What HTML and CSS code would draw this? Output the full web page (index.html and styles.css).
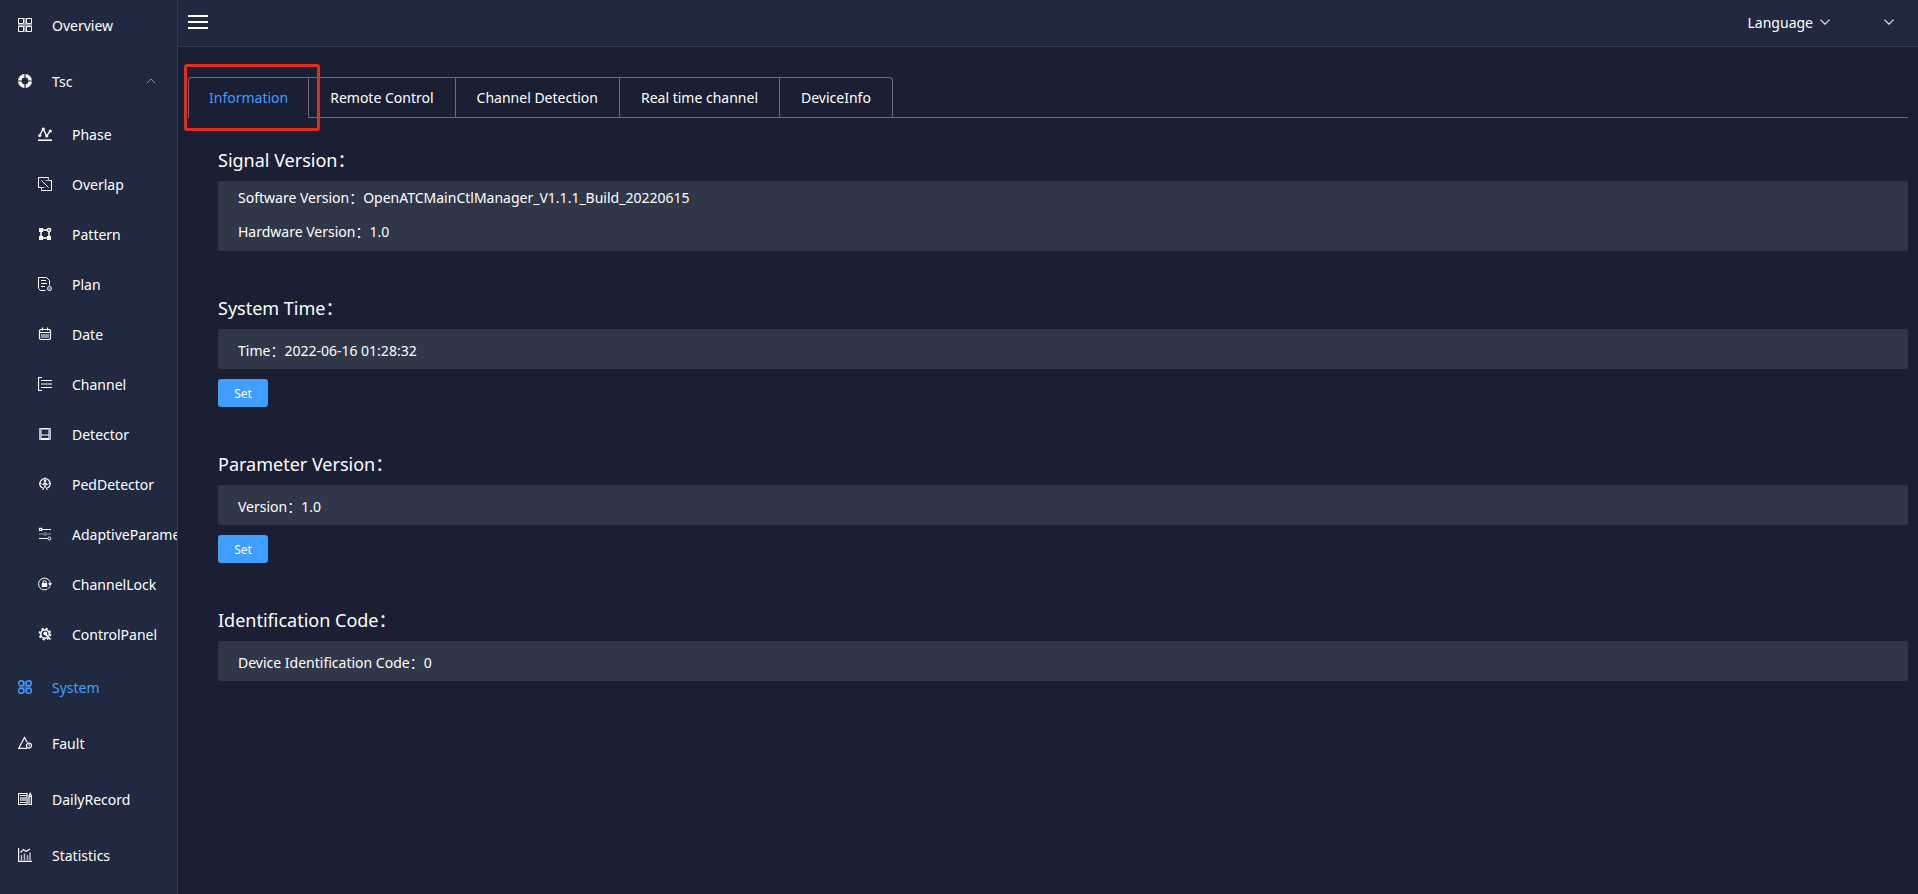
FILE: index.html
```html
<!DOCTYPE html>
<html lang="en">
<head>
<meta charset="utf-8">
<title>System Information</title>
<link rel="stylesheet" href="styles.css">
</head>
<body>
<div class="app">
  <nav class="sidebar" aria-label="Main">
    <a class="item first" href="#"><svg class="icon" viewBox="0 0 14 14"><path d="M6 0h2v14H6zM0 6h14v2H0z" fill="#8d95a6" stroke="none"/><path d="M.5.5h5v5h-5zM8.500.5h5v5h-5zM.5 8.500h5v5h-5zM8.500 8.500h5v5h-5z"/></svg><span class="label">Overview</span></a>
    <a class="item" href="#"><svg class="icon" viewBox="0 0 14 14"><circle cx="7" cy="7" r="5.200" stroke-width="3.600"/><path d="M7 0v4M7 10v4M0 7h4M10 7h4" stroke="#202940" stroke-width="1.200"/></svg><span class="label">Tsc</span><svg class="caret" viewBox="0 0 10 6"><path d="M.7 5.300 5 1l4.300 4.300"/></svg></a>
    <div class="sub">
      <a class="subitem" href="#"><svg class="icon" viewBox="0 0 14 14"><path d="M0 13.200h14" stroke-width="1.600"/><path d="M1.500 8.500 5.300 2l3.400 7 3.800-5.300" stroke-width="1.300"/><g fill="currentColor" stroke="none"><circle cx="1.700" cy="8.500" r="1.600"/><circle cx="5.300" cy="2" r="1.600"/><circle cx="8.700" cy="9" r="1.600"/><circle cx="12.300" cy="4" r="1.600"/></g></svg><span class="label">Phase</span></a>
      <a class="subitem" href="#"><svg class="icon" viewBox="0 0 14 14"><path d="M4.500 10.500h-4V.5h10v3M11 3.500h2.500v10h-10V11"/><path d="M3.500 13.500v-3h3M10.500.5v3h-3" stroke="#b4bac6"/><path d="M3.500 3.500 10.500 10.500"/></svg><span class="label">Overlap</span></a>
      <a class="subitem" href="#"><svg class="icon" viewBox="0 0 14 14"><path d="M3 3h8v8H3z" stroke-width="1.500"/><g fill="currentColor" stroke="none"><path d="M1 1h4v4H1zM1 9h4v4H1zM9 9h4v4H9z"/><circle cx="11" cy="3" r="2.300"/></g><circle cx="11" cy="3" r=".9" fill="#59627a" stroke="none"/></svg><span class="label">Pattern</span></a>
      <a class="subitem" href="#"><svg class="icon" viewBox="0 0 14 14"><path d="M7.500 13.500h-5l-2-2V.5h8l3 3v5M3 3.500h5M3 6.500h6M3 9.500h4"/><circle cx="11.500" cy="11.500" r="2"/><path d="m10.800 11.500.6.6 1-1.200" stroke-width=".8"/></svg><span class="label">Plan</span></a>
      <a class="subitem" href="#"><svg class="icon" viewBox="0 0 14 14"><path d="M2.500 2.500h9l1 1v8l-1 1h-9l-1-1v-8zM1.500 5.500h11M4.500.5v3M9.500.5v3" stroke-width="1.200"/><path d="M3 7h8v4H3z" fill="#8d95a6" stroke="none"/></svg><span class="label">Date</span></a>
      <a class="subitem" href="#"><svg class="icon" viewBox="0 0 14 14"><path d="M4 .5H.5v13H4M3 3.500h11M3 7h11M3 10.500h11" stroke-width="1.200"/></svg><span class="label">Channel</span></a>
      <a class="subitem" href="#"><svg class="icon" viewBox="0 0 14 14"><path d="M1 1.500h12M1 12.500h12"/><path d="M2 1v12M12 1v12" stroke-width="2" stroke="#b4bac6"/><path d="M3 2.500h8M3.500 2v9M10.500 2v9" stroke="#8d95a6"/><path d="M3 8h8M3 11.500h8"/></svg><span class="label">Detector</span></a>
      <a class="subitem" href="#"><svg class="icon" viewBox="0 0 14 14"><path d="M3.500 10.700A5.200 5.200 0 1 1 10.500 10.700" stroke-width="1.200"/><path d="M7 .5v2M1 6.500h2.500M10.500 6.500H13"/><circle cx="7" cy="4" r="1.300" fill="currentColor" stroke="none"/><path d="M7 5v4M7 5.500 4.500 8M7 5.500 9.500 8" stroke-width="1.200"/><path d="M7 9 4.500 13M7 9l2.500 4M3 9.500l3 2.500M11 9.500 8 12"/></svg><span class="label">PedDetector</span></a>
      <a class="subitem" href="#"><svg class="icon" viewBox="0 0 14 14"><path d="M4 2.500h9M1 11.500h8.500"/><path d="M1 7h4M9 7h4" stroke="#8d95a6"/><circle cx="7" cy="7" r="1.400" stroke="#8d95a6"/><path d="M1.500 1.300h2.200v2.200H1.500z" stroke-width="1.200"/><circle cx="11.300" cy="11.500" r="1.500"/></svg><span class="label">AdaptiveParameter</span></a>
      <a class="subitem" href="#"><svg class="icon" viewBox="0 0 14 14"><path d="M12.300 7A5.900 5.900 0 1 0 9.500 12M10.500 11.500 12 9.500"/><path d="M10 6.300h4L12 9z" fill="currentColor" stroke="none"/><path d="M3.800 6h5.400v4H3.800z" fill="currentColor" stroke="none"/><path d="M5 6.500V5a1.500 1.500 0 0 1 3 0v1.500"/></svg><span class="label">ChannelLock</span></a>
      <a class="subitem" href="#"><svg class="icon" viewBox="0 0 14 14"><circle cx="7" cy="7" r="4.300" stroke-width="1.500"/><circle cx="7" cy="7" r="5.600" stroke-width="1.600" stroke-dasharray="2.200 2.198"/><circle cx="7.300" cy="6.500" r="2" fill="currentColor" stroke="none"/><path d="m9 10.500 2-2 2 3z" fill="#202940" stroke="none"/><path d="m7.500 7 5 5.500" stroke-width="1.800"/></svg><span class="label">ControlPanel</span></a>
    </div>
    <a class="item active" href="#"><svg class="icon" viewBox="0 0 14 14"><path d="M5 5h4v4H5zM6 1h2v12H6zM1 6h12v2H1z" fill="currentColor" opacity=".45" stroke="none"/><rect x=".7" y=".7" width="5" height="5" rx="2.200" stroke-width="1.400"/><rect x="8.300" y=".7" width="5" height="5" rx="2.200" stroke-width="1.400"/><rect x=".7" y="8.300" width="5" height="5" rx="2.200" stroke-width="1.400"/><rect x="8.300" y="8.300" width="5" height="5" rx="2.200" stroke-width="1.400"/></svg><span class="label">System</span></a>
    <a class="item" href="#"><svg class="icon" viewBox="0 0 14 14"><path d="M9 12.300H.8L6.500 1.500 9.300 6.500" stroke-width="1.200"/><circle cx="10.900" cy="9.600" r="2.500" stroke-width="1.200"/><path d="M10.800 8v1.700h1.200" stroke-width=".8"/></svg><span class="label">Fault</span></a>
    <a class="item" href="#"><svg class="icon" viewBox="0 0 14 14"><path d="M9 1.500H.5v11H9z" stroke-width="1.200"/><path d="M2 3.500h6M2 10.500h6"/><path d="M2 5h6v4H2z" fill="#a0a6b5" stroke="none"/><path d="M11 12.500V4l1.200-2.500L13.400 4v8.500zM11 4.500h2.400" stroke-width="1.200"/></svg><span class="label">DailyRecord</span></a>
    <a class="item" href="#"><svg class="icon" viewBox="0 0 14 14"><path d="M.6 0v13.400H14" stroke-width="1.200"/><path d="M3.500 12.500V7M6.500 12.500V5.500M9.500 12.500V7M12 12.500V4.500" stroke-width="1.500" stroke="#b4bac6"/><path d="m2.500 4.500 3-3 2.500 2L12 1" stroke-width="1.200"/></svg><span class="label">Statistics</span></a>
  </nav>
  <div class="page">
    <header class="topbar">
      <button class="plain" type="button" aria-label="Toggle menu"><svg class="burger" viewBox="0 0 20 16"><path d="M0 2h20M0 8h20M0 14h20"/></svg></button>
      <div class="actions">
        <button class="plain" type="button"><span class="label">Language</span><svg class="down" viewBox="0 0 10 6"><path d="M.5.700 5 5.200 9.500.700"/></svg></button>
        <button class="plain" type="button" aria-label="Account"><svg class="down" viewBox="0 0 10 6"><path d="M.5.700 5 5.200 9.500.700"/></svg></button>
      </div>
    </header>
    <main class="main">
      <div class="tabbar">
        <div class="tabs" role="tablist">
          <button class="tab selected" role="tab" aria-selected="true" type="button">Information<span class="marker"></span></button>
          <button class="tab" role="tab" aria-selected="false" type="button">Remote Control</button>
          <button class="tab" role="tab" aria-selected="false" type="button">Channel Detection</button>
          <button class="tab" role="tab" aria-selected="false" type="button">Real time channel</button>
          <button class="tab" role="tab" aria-selected="false" type="button">DeviceInfo</button>
        </div>
      </div>
      <div class="content">
        <section class="group">
          <h2 class="title">Signal Version：</h2>
          <div class="panel double"><p class="row">Software Version：OpenATCMainCtlManager_V1.1.1_Build_20220615</p><p class="row">Hardware Version：1.0</p></div>
        </section>
        <section class="group">
          <h2 class="title">System Time：</h2>
          <div class="panel"><p class="row">Time：2022-06-16 01:28:32</p></div>
          <button class="set" type="button">Set</button>
        </section>
        <section class="group">
          <h2 class="title">Parameter Version：</h2>
          <div class="panel"><p class="row">Version：1.0</p></div>
          <button class="set" type="button">Set</button>
        </section>
        <section class="group">
          <h2 class="title">Identification Code：</h2>
          <div class="panel"><p class="row">Device Identification Code：0</p></div>
        </section>
      </div>
    </main>
  </div>
</div>
</body>
</html>
```

FILE: styles.css
```css
* { box-sizing: border-box; }

body {
  margin: 0;
  background: #1a1f34;
  color: #fff;
  font: 14px/20px "Noto Sans", "Noto Sans CJK SC", sans-serif;
}

button { font: inherit; color: inherit; cursor: pointer; }
svg { display: block; flex: none; fill: none; }

.app { display: flex; height: 100vh; overflow: hidden; }

.sidebar {
  flex: none;
  width: 178px;
  overflow: hidden;
  background: #202940;
  border-right: 1px solid #303a50;
}
.item, .subitem {
  display: flex;
  align-items: center;
  color: #fff;
  text-decoration: none;
  white-space: nowrap;
}
.item { height: 56px; padding: 0 21px 0 18px; gap: 20px; }
.item.first { margin-top: -3px; }
.item.active { color: #409eff; }
.subitem { height: 50px; padding-left: 38px; gap: 20px; }
.label { padding-top: 2px; }
.icon { width: 14px; height: 14px; stroke: currentColor; }
.caret { width: 10px; height: 6px; margin-left: auto; stroke: #909399; }

.page { flex: 1; min-width: 0; display: flex; flex-direction: column; }
.topbar {
  display: flex;
  justify-content: space-between;
  align-items: center;
  height: 47px;
  padding: 0 24px 2px 10px;
  background: #202940;
  border-bottom: 1px solid #303a50;
}
.plain {
  display: flex;
  align-items: center;
  gap: 7px;
  padding: 0;
  border: 0;
  background: none;
}
.burger { width: 20px; height: 16px; stroke: #fff; stroke-width: 2; }
.actions { display: flex; gap: 54px; }
.down { width: 10px; height: 6px; stroke: #e4e7ed; stroke-width: 1.2; }

.main { flex: 1; overflow: hidden; padding: 30px 10px; }
.tabbar { display: flex; border-bottom: 1px solid #696d7b; }
.tabs {
  display: flex;
  border: 1px solid #696d7b;
  border-bottom: 0;
  border-radius: 4px 4px 0 0;
}
.tab {
  height: 40px;
  margin-bottom: -1px;
  padding: 1px 21px 0;
  border: 0;
  border-left: 1px solid #696d7b;
  border-bottom: 1px solid #696d7b;
  background: none;
  white-space: nowrap;
}
.tab.selected {
  position: relative;
  padding: 1px 20px 0;
  border-left: 0;
  border-bottom-color: #1a1f34;
  color: #409eff;
}
.marker {
  position: absolute;
  inset: -14px -12px -14px -5px;
  border: 3px solid #e02b20;
  border-radius: 3px;
  pointer-events: none;
}

.content { padding: 29px 0 0 30px; }
.group { margin-bottom: 44px; }
.title { margin: 0 0 8px; font-size: 18px; font-weight: 400; line-height: 26px; }
.panel { padding: 12px 20px 8px; background: #303749; border-radius: 2px; }
.panel.double { display: grid; gap: 14px; padding: 7px 20px 9px; }
.row { margin: 0; }
.set {
  display: block;
  width: 50px;
  height: 28px;
  margin-top: 10px;
  padding: 2px 0 0;
  border: 0;
  border-radius: 3px;
  background: #409eff;
  font-size: 12px;
}
```
